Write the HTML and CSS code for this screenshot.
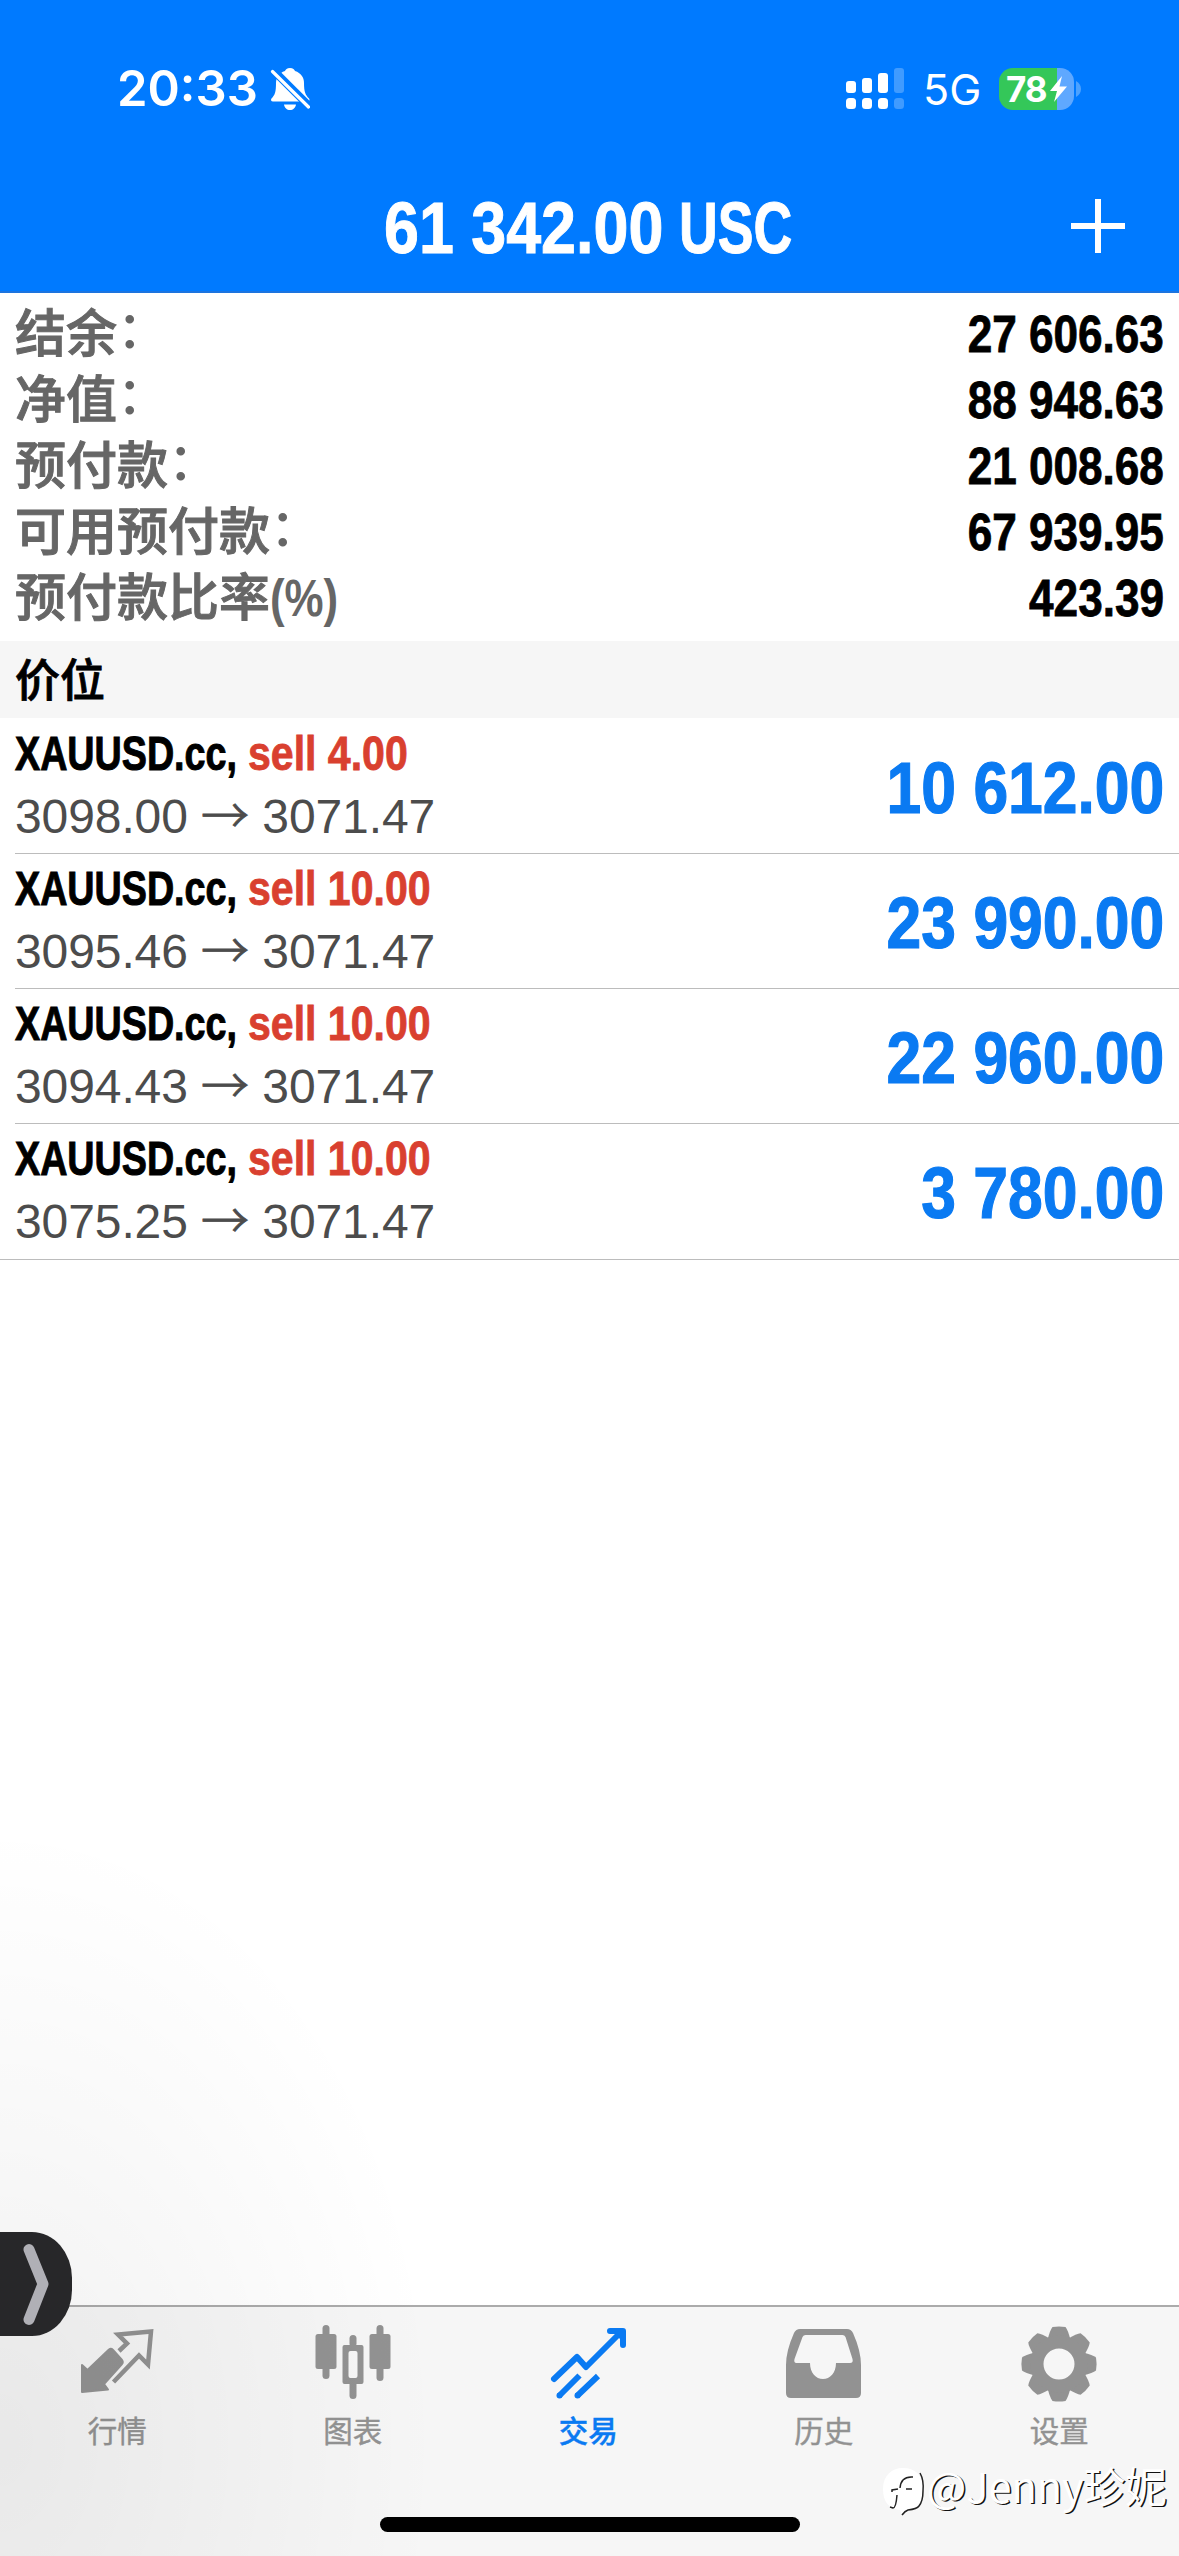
FILE: index.html
```html
<!DOCTYPE html>
<html lang="zh-CN">
<head>
<meta charset="utf-8">
<title>交易</title>
<link rel="stylesheet" href="styles.css">
</head>
<body>
<div class="app">
  <header class="header">
    <div class="status">
      <div class="status-left">
        <span class="clock">20:33</span>
        <svg class="bell" viewBox="0 0 40 44"><path fill="#fff" d="M20 1c3 0 4.500 1.500 5 3 6 2 9 6.500 9 12 0 9 1.500 12 5 15.500 1 1.300 .5 3-1.500 3H3c-2 0-2.500-1.700-1.500-3C5 28 6 25 6 16 6 10.500 9 6 15 4c.5-1.500 2-3 5-3zM14 37.500h12c-.5 3.500-3 5.500-6 5.500s-5.500-2-6-5.500z"/><path stroke="#007aff" stroke-width="8" d="M2 2l38 38"/><path stroke="#fff" stroke-width="3.200" stroke-linecap="round" d="M2.500 4.500l36 35.500"/></svg>
      </div>
      <div class="status-right">
        <svg class="signal" viewBox="0 0 58 42"><g fill="#fff"><rect x="0" y="13" width="10" height="12" rx="3"/><rect x="16" y="10" width="10" height="15" rx="3"/><rect x="32" y="5" width="10" height="20" rx="3"/><rect x="0" y="30" width="10" height="11" rx="3.500"/><rect x="16" y="30" width="10" height="11" rx="3.500"/><rect x="32" y="30" width="10" height="11" rx="3.500"/></g><g fill="#fff" fill-opacity=".25"><rect x="48" y="0" width="10" height="25" rx="3"/><rect x="48" y="30" width="10" height="11" rx="3.500"/></g></svg>
        <span class="network">5G</span>
        <div class="battery"><span>78</span><svg class="bolt" viewBox="0 0 17 26"><path fill="#fff" d="M12 0L0 15h7L4 26 17 10.500H9.500z"/></svg></div>
        <svg class="battery-cap" viewBox="0 0 6 16"><path fill="#fff" fill-opacity=".3" d="M0 0c3 1.500 5 4.500 5 8s-2 6.500-5 8z"/></svg>
      </div>
    </div>
    <div class="titlebar">
      <h1 class="title"><span class="title-num">61 342.00</span><span class="title-cur">USC</span></h1>
      <svg class="plus" viewBox="0 0 54 54"><path stroke="#fff" stroke-width="6" d="M27 0v54M0 27h54"/></svg>
    </div>
  </header>

  <section class="summary">
    <div class="sum-row"><span class="label">结余<i class="colon">：</i></span><span class="value">27 606.63</span></div>
    <div class="sum-row"><span class="label">净值<i class="colon">：</i></span><span class="value">88 948.63</span></div>
    <div class="sum-row"><span class="label">预付款<i class="colon">：</i></span><span class="value">21 008.68</span></div>
    <div class="sum-row"><span class="label">可用预付款<i class="colon">：</i></span><span class="value">67 939.95</span></div>
    <div class="sum-row"><span class="label">预付款比率<i class="pct">(%)</i></span><span class="value">423.39</span></div>
  </section>

  <h2 class="section">价位</h2>

  <main class="positions">
    <div class="pos"><div class="pos-info"><div class="pos-head"><span class="symbol">XAUUSD.cc,</span><span class="side">sell 4.00</span></div><div class="prices">3098.00 <span class="arrow">→</span> 3071.47</div></div><div class="profit">10 612.00</div></div>
    <div class="pos"><div class="pos-info"><div class="pos-head"><span class="symbol">XAUUSD.cc,</span><span class="side">sell 10.00</span></div><div class="prices">3095.46 <span class="arrow">→</span> 3071.47</div></div><div class="profit">23 990.00</div></div>
    <div class="pos"><div class="pos-info"><div class="pos-head"><span class="symbol">XAUUSD.cc,</span><span class="side">sell 10.00</span></div><div class="prices">3094.43 <span class="arrow">→</span> 3071.47</div></div><div class="profit">22 960.00</div></div>
    <div class="pos"><div class="pos-info"><div class="pos-head"><span class="symbol">XAUUSD.cc,</span><span class="side">sell 10.00</span></div><div class="prices">3075.25 <span class="arrow">→</span> 3071.47</div></div><div class="profit">3 780.00</div></div>
  </main>

  <nav class="tabs">
    <div class="tab"><svg viewBox="0 0 76 76"><path fill="#929292" stroke="#929292" stroke-width="2" stroke-linejoin="round" d="M3 37l5.500 5L30 21.500q2-1.500 4 .5l9 10q1.500 2 0 4L25 56l4 5.500L3 64z"/><path fill="none" stroke="#929292" stroke-width="4.500" d="M40 23l8-7.500-9-9 33-3-3 33-9-9L34.500 54"/></svg><span>行情</span></div>
    <div class="tab"><svg viewBox="0 0 76 76"><g fill="#929292"><rect x=".5" y="6" width="21" height="35" rx="2.500"/><rect x="7.500" y="-3" width="7" height="54" rx="3.500"/><rect x="54.500" y="6" width="21" height="35" rx="2.500"/><rect x="61.500" y="-3" width="7" height="56" rx="3.500"/><rect x="34.500" y="7" width="7" height="12" rx="3.500"/><rect x="34.500" y="52" width="7" height="19" rx="3.500"/><path fill-rule="evenodd" d="M29.500 17h17a2 2 0 0 1 2 2v35a2 2 0 0 1-2 2h-17a2 2 0 0 1-2-2V19a2 2 0 0 1 2-2zm6 6a2 2 0 0 0-2 2v23a2 2 0 0 0 2 2h5a2 2 0 0 0 2-2V25a2 2 0 0 0-2-2z"/></g></svg><span>图表</span></div>
    <div class="tab active"><svg viewBox="0 0 76 76"><g fill="none" stroke="#0a7af2" stroke-width="6" stroke-linecap="round" stroke-linejoin="round"><path d="M4 51L27 29l9 10L70 5M60 3h13v14"/></g><path fill="#0a7af2" d="M60 1h15v15z"/><path stroke="#0a7af2" stroke-width="6" fill="none" d="M9 68L29.500 47.500M27 68L48 48"/><circle cx="9.500" cy="67.500" r="3" fill="#0a7af2"/><circle cx="27.500" cy="67.500" r="3" fill="#0a7af2"/></svg><span>交易</span></div>
    <div class="tab"><svg viewBox="0 0 76 76"><path fill="#929292" fill-rule="evenodd" d="M14 1h47q4 0 6 4 8 18 8 32v28q0 5-5 5H5q-5 0-5-5V37Q0 23 8 5q2-4 6-4zm5.500 6q-2 0-3 2L8.500 31q-1 4 2 4H24c0 10 6 16 13 16s13-6 13-16h14q3.500 0 2.500-4l-7-22q-1-2-3-2z"/></svg><span>历史</span></div>
    <div class="tab"><svg viewBox="0 0 76 76"><g fill="#929292"><path id="tooth" d="M26.500 12Q29 2 31.500-1q6.500-1.200 13 0Q47 2 49.500 12z"/><use href="#tooth" transform="rotate(45 38 36)"/><use href="#tooth" transform="rotate(90 38 36)"/><use href="#tooth" transform="rotate(135 38 36)"/><use href="#tooth" transform="rotate(180 38 36)"/><use href="#tooth" transform="rotate(225 38 36)"/><use href="#tooth" transform="rotate(270 38 36)"/><use href="#tooth" transform="rotate(315 38 36)"/></g><circle cx="38" cy="36" r="22" fill="none" stroke="#929292" stroke-width="13"/></svg><span>设置</span></div>
  </nav>

  <div class="shade"></div>
  <div class="handle"><svg viewBox="0 0 72 104"><path fill="none" stroke="#b0b0b6" stroke-width="11" stroke-linecap="round" stroke-linejoin="round" d="M29 17.500L43 52 29 87.500"/></svg></div>
  <div class="watermark"><svg viewBox="0 0 44 50"><path fill="#fff" d="M20 2c12 0 20 7 20 21s-6 19-15 21l-6 5-2-5C6 43 0 36 0 23S8 2 20 2z"/><path fill="none" stroke="#222" stroke-width="1.500" d="M37 7q4 7 3 18 0 10-4 15-2 3-11 4-3 1-6 5M30 11q-12-1-13 11M9 26v-2l6-1M23 23h6M14 29q-1 13-4 13l-3-1"/></svg><span>@Jenny珍妮</span></div>
  <div class="home"></div>
</div>
</body>
</html>
```
FILE: styles.css
```css
* { box-sizing: border-box; margin: 0; padding: 0; }
body { width: 1179px; height: 2556px; background: #fff; overflow: hidden; font-family: "Liberation Sans", "Noto Sans CJK SC", sans-serif; }
.app { position: relative; width: 1179px; height: 2556px; display: flex; flex-direction: column; }
i { font-style: normal; }

.header { height: 293px; background: #007aff; border-bottom: 2px solid #1c74df; color: #fff; flex: none; }
.status { height: 178px; padding: 0 97px 0 117px; display: flex; justify-content: space-between; align-items: center; }
.status-left, .status-right { display: flex; align-items: center; }
.clock { font: 600 49px/60px Inter, sans-serif; width: 153px; white-space: nowrap; }
.bell { width: 40px; height: 44px; }
.signal { width: 58px; height: 42px; }
.network { font: 400 43px/60px Inter, sans-serif; margin-left: 19px; width: 76px; }
.battery { width: 75px; height: 42px; border-radius: 14px; background: linear-gradient(90deg, #34c759 58px, #5fa8ff 58px); display: flex; align-items: center; padding-left: 7px; font: 700 35px/42px Inter, sans-serif; }
.battery span { width: 44px; letter-spacing: -1px; }
.bolt { width: 17px; height: 26px; }
.battery-cap { width: 6px; height: 16px; margin-left: 2px; }
.titlebar { height: 113px; display: grid; grid-template-columns: 130px 1fr 130px; align-items: start; }
.title { grid-column: 2; justify-self: center; width: 411px; height: 96px; margin-top: 2px; display: flex; font: 700 72px/96px "Liberation Sans", sans-serif; white-space: pre; -webkit-text-stroke: 1px #fff; }
.title-num { width: 295px; transform: scaleX(.872); transform-origin: left; }
.title-cur { width: 116px; transform: scaleX(.745); transform-origin: left; }
.plus { width: 54px; height: 54px; margin: 21px 0 0 22px; }

.summary { height: 348px; padding: 9px 15px 0; flex: none; }
.sum-row { height: 66px; display: flex; justify-content: space-between; align-items: center; line-height: 66px; }
.label { font: 500 51px/66px "Liberation Sans", "Noto Sans CJK SC", sans-serif; color: #666; white-space: nowrap; -webkit-text-stroke: 1px #666; }
.colon { line-height: 0; vertical-align: 4px; -webkit-text-stroke: 0; }
.pct { display: inline-block; font: 700 51px/60px "Liberation Sans", sans-serif; transform: scaleX(.86); transform-origin: left; -webkit-text-stroke: 0; }
.value { font: 700 51px/66px "Liberation Sans", sans-serif; transform: scaleX(.865); transform-origin: right; -webkit-text-stroke: .8px #000; }

.section { height: 77px; padding-left: 15px; background: #f6f6f6; font: 500 45px/81px "Liberation Sans", "Noto Sans CJK SC", sans-serif; -webkit-text-stroke: .8px #000; flex: none; }

.positions { flex: 1; padding-top: 1px; }
.pos { height: 135px; margin-left: 15px; padding-right: 15px; border-bottom: 1px solid #bcbcbc; display: flex; justify-content: space-between; }
.pos:last-child { margin-left: 0; padding-left: 15px; height: 136px; }
.pos-head { display: flex; height: 60px; padding-top: 5px; font: 700 48px/60px "Liberation Sans", sans-serif; white-space: nowrap; }
.symbol { width: 233px; transform: scaleX(.785); transform-origin: left; -webkit-text-stroke: 1px #000; }
.side { color: #d9402f; transform: scaleX(.855); transform-origin: left; -webkit-text-stroke: .8px #d9402f; }
.prices { font: 400 48px/60px "Liberation Sans", sans-serif; padding-top: 8px; color: #4c4c4c; white-space: nowrap; letter-spacing: -.1px; }
.arrow { display: inline-block; width: 48px; font: 300 48px/50px "Noto Sans CJK SC", sans-serif; -webkit-text-stroke: .8px #4c4c4c; }
.profit { font: 700 72px/139px "Liberation Sans", sans-serif; color: #0a7af2; transform: scaleX(.867); transform-origin: right; white-space: nowrap; -webkit-text-stroke: 1.200px #0a7af2; }

.tabs { height: 251px; flex: none; background: #f6f6f6; border-top: 2px solid #ababab; display: grid; grid-template-columns: repeat(5, 235.500px); }
.tab { display: flex; flex-direction: column; align-items: center; padding-top: 21px; margin-left: -1px; color: #929292; }
.tab svg { width: 76px; height: 76px; overflow: visible; }
.tab span { font: 400 29.500px/40px "Liberation Sans", "Noto Sans CJK SC", sans-serif; margin-top: 8px; -webkit-text-stroke: .4px #929292; }
.tab.active { color: #0a7af2; }
.tab.active span { font-weight: 500; -webkit-text-stroke: .4px #0a7af2; }

.shade { position: absolute; left: 0; top: 1800px; width: 460px; height: 756px; background: radial-gradient(ellipse 440px 620px at 0 640px, rgba(0,0,0,.055), rgba(0,0,0,.028) 50%, rgba(0,0,0,0)); }
.handle { position: absolute; left: 0; top: 2232px; width: 72px; height: 104px; background: #272729; border-radius: 0 40px 40px 0 / 0 46px 46px 0; }
.watermark { position: absolute; left: 883px; top: 2460px; display: flex; align-items: flex-start; color: #fff; font: 400 41.500px/50px "Noto Sans CJK SC", sans-serif; text-shadow: 1.500px 1px 0 #111; white-space: nowrap; }
.watermark svg { width: 44px; height: 50px; margin-top: 6px; }
.home { position: absolute; left: 380px; top: 2517px; width: 420px; height: 15px; border-radius: 8px; background: #000; }
```
